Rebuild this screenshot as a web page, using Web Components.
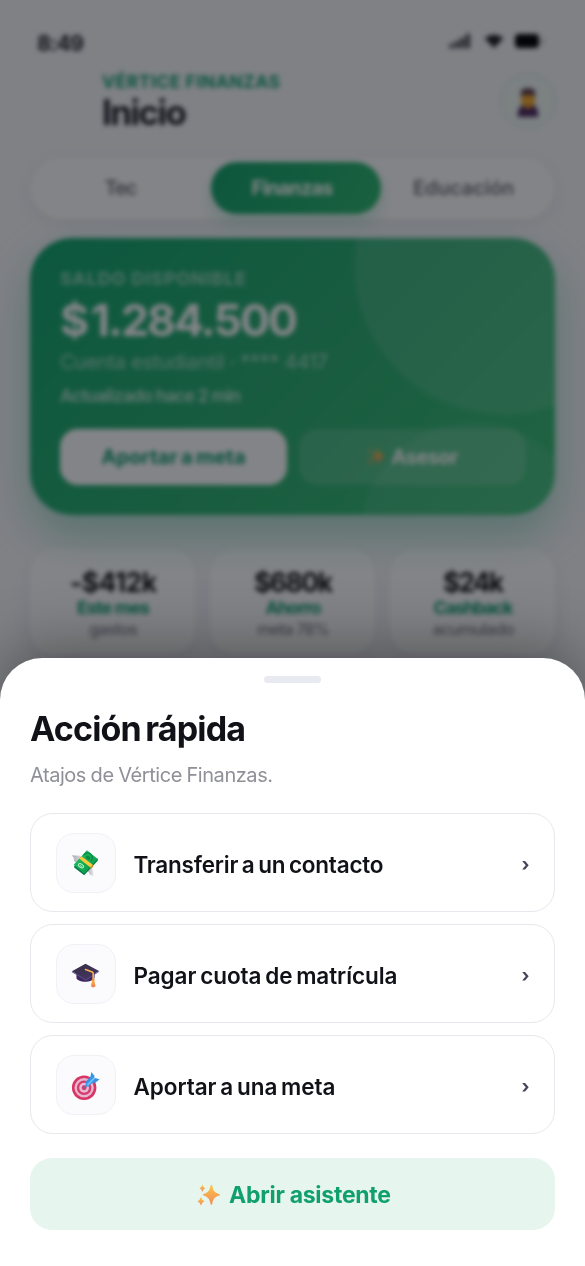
<!DOCTYPE html>
<html lang="es">
<head>
<meta charset="utf-8">
<meta name="viewport" content="width=device-width, initial-scale=1">
<title>Vértice Finanzas</title>
<style>
html,body{margin:0;height:100%;overflow:hidden;background:#f7f8fb}
body{font-family:Inter,"Plus Jakarta Sans","Liberation Sans",sans-serif;color:#111217}
</style>
</head>
<body>
<vf-screen></vf-screen>
<script>
const define = (name, html, setup) => {
  const tpl = document.createElement('template');
  tpl.innerHTML = html;
  customElements.define(name, class extends HTMLElement {
    connectedCallback() {
      if (this.shadowRoot) return;
      this.attachShadow({mode: 'open'}).append(tpl.content.cloneNode(true));
      if (setup) setup(this, this.shadowRoot);
    }
  });
};

/* One line of text tracked to a given measure: w = width, s = size, b = weight, l = line height, g = word gap */
const pen = document.createElement('canvas').getContext('2d');
define('vf-text', `<style>:host{display:block;white-space:nowrap;flex:none}</style><slot></slot>`, el => {
  const a = n => el.getAttribute(n);
  const text = el.textContent;
  const gap = +(a('g') || 0);
  const spaces = text.split(' ').length - 1;
  pen.font = `${a('b')} ${a('s')}px Inter`;
  const track = (a('w') - pen.measureText(text).width - gap * spaces) / (text.length - 1);
  el.style.cssText = `font-size:${a('s')}px;font-weight:${a('b')};line-height:${a('l')}px;width:${a('w')}px;word-spacing:${gap}px;letter-spacing:${track.toFixed(3)}px`;
});

const icons = {
  money: `<defs><linearGradient id="g" x2="1" y2="1"><stop stop-color="#24c969"/><stop offset="1" stop-color="#079044"/></linearGradient><linearGradient id="w" x2="1"><stop stop-color="#aaa8b0"/><stop offset="1" stop-color="#e7e5ea"/></linearGradient></defs>
   <path d="M1 7l9 .5 4 6-8 4.500-.5-3.500-2.500-1.500.5-2.500z" fill="url(#w)"/><path d="M17 24l6-6 2 12-4-1.500-1.500-3z" fill="url(#w)"/>
   <path d="M3.500 18.500v2l11 8.500 15-16v-2.500z" fill="#087b43"/><path d="M17.500 1.500 29.500 11 14.500 27 3 17.500z" fill="url(#g)"/>
   <path d="M14 7c2-3 5-3.500 7.500-1.500s2.500 5 .5 8" fill="none" stroke="#0b8b44" stroke-width="1.500"/><ellipse cx="18.700" cy="9.500" rx="2.600" ry="2" transform="rotate(35 18.700 9.500)" fill="#0b8c43"/>
   <ellipse cx="11" cy="18.500" rx="3.200" ry="1.900" transform="rotate(32 11 18.500)" fill="none" stroke="#b8f2c9" stroke-width="1"/><path d="M9.500 18l3 1.500" stroke="#b8f2c9"/>
   <path d="m11.500 8 12.500 9.500-2.500 2.800-12.500-9.800z" fill="#fac83c"/><path d="m24 17.500 .5 2-2.500 2.700-.5-1.900z" fill="#d99124"/>`,
  cap: `<defs><linearGradient id="c" x2="1" y2="1"><stop stop-color="#352d40"/><stop offset="1" stop-color="#46366b"/></linearGradient><linearGradient id="t" x2="0" y2="1"><stop stop-color="#f7c352"/><stop offset="1" stop-color="#f07947"/></linearGradient></defs>
   <path d="M6 13v7c2 5 17 5.500 20-.5v-7z" fill="#3d2762"/><path d="M1 12.500 16 4l15 8-14.500 9.500z" fill="url(#c)"/><path d="M1 12.500v1l15.500 9L31 13v-1l-14.500 9.500z" fill="#60528a"/>
   <path d="M16 10.500l7.500 2.800q1 .5 1 2v6" fill="none" stroke="#f5b14d" stroke-width="1.800" stroke-linecap="round"/><path d="M23.500 21h2l1.500 8q-2.500 2.500-5 0z" fill="url(#t)"/><circle cx="24.500" cy="21.500" r="1.400" fill="#ee8b45"/>`,
  target: `<circle cx="14.500" cy="18.500" r="13.500" fill="#d73564"/><circle cx="14.500" cy="18.500" r="10.700" fill="#e7b5d0"/><circle cx="14.500" cy="18.500" r="8" fill="#d63b6b"/><circle cx="14.500" cy="18.500" r="5.400" fill="#e8b9d3"/><circle cx="14.500" cy="18.500" r="2.700" fill="#cf3d6c"/>
   <path d="M14.500 18.500 24 9" stroke="#5977a8" stroke-width="1.300"/><path d="M16 17l.5-5.500 5-5.500 1-5 3.500 4.500-.5 2 6 1.500-4.500 4-4 .5-3.500 3.500z" fill="#3794e5"/><path d="M18 15.500l8-8" stroke="#72bdf5" stroke-width="2"/>`,
  sparkles: `<defs><linearGradient id="s" x2="0" y2="1"><stop stop-color="#fbc63e"/><stop offset="1" stop-color="#f28b61"/></linearGradient></defs><g fill="url(#s)"><path d="M20 1c.8 0 1 1 1.300 2 1.300 6 3 8.500 8.700 10.500 2.700 1 2.700 2 0 3-5.700 2-7.400 4.500-8.700 10.500-.5 2.500-2.100 2.500-2.600 0-1.300-6-3-8.500-8.700-10.500-2.700-1-2.700-2 0-3 5.700-2 7.400-4.500 8.700-10.500.3-1 .5-2 1.300-2z"/><path d="M7.500 1q1.200 4.300 4 5-2.800.9-4 5-1.200-4.100-4-5 2.800-.7 4-5z"/><path d="M5.500 18q1.400 5 5 6-3.600 1-5 6-1.400-5-5-6 3.600-1 5-6z"/></g>`,
  student: `<path d="M1 31c0-8 3-12 8-13h14c5 1 8 5 8 13z" fill="#4c2860"/><path d="M10 17h12v3l-6 3-6-3z" fill="#d98b21"/><rect x="6" y="5" width="20" height="14" rx="5" fill="#f2a72a"/><path d="M6 9V2l10-2 10 2v7q-10-4-20 0z" fill="#4f3044"/>`,
  signal: `<g fill="#1a1b22"><rect x="1" y="21" width="5" height="8" rx="1"/><rect x="9" y="16" width="5" height="13" rx="1"/><rect x="17" y="10" width="5" height="19" rx="1"/><rect x="25" y="3" width="5" height="26" rx="1"/></g>`,
  wifi: `<path d="M1 10Q16-3 31 10L16 28z" fill="#1a1b22"/>`
};
define('vf-icon', `<style>:host{display:block;flex:none}svg{display:block;width:100%;height:100%}</style><svg viewBox="0 0 32 32" preserveAspectRatio="none" aria-hidden="true"></svg>`, (el, root) => {
  root.querySelector('svg').innerHTML = icons[el.getAttribute('name')];
});

define('vf-status', `<style>
:host{display:flex;justify-content:space-between;align-items:center;height:28px;padding:29px 41px 1px 37px}
div{display:flex;align-items:center;padding-bottom:4px}
vf-text{color:#22232a}
.s{width:22px;height:18px}.w{width:20px;height:17px;margin-left:13px}
.b{width:24px;height:14px;border-radius:4px;background:#000;margin-left:11px}.t{width:2px;height:5px;background:#aaa;margin-left:3px}
</style><vf-text w="47" s="21.500" b="700" l="28">8:49</vf-text>
<div><vf-icon class="s" name="signal"></vf-icon><vf-icon class="w" name="wifi"></vf-icon><span class="b"></span><span class="t"></span></div>`);

define('vf-header', `<style>
:host{display:flex;justify-content:space-between;align-items:flex-start;padding:12px 29px 0 102px;height:86px;box-sizing:border-box}
.k{color:#0e9f6e}.n{color:#1b1c24}.a{width:54px;height:54px;border:1.500px solid #cbe6d9;border-radius:50%;display:grid;place-items:center;background:#f0f8f5;margin-top:3px}
vf-icon{width:22px;height:30px;margin:4px 1px 0 0}
</style><div><vf-text class="k" w="178" s="17.500" b="700" l="24">VÉRTICE FINANZAS</vf-text>
<vf-text class="n" w="85" s="35" b="700" l="36">Inicio</vf-text></div><div class="a"><vf-icon name="student"></vf-icon></div>`);

define('vf-tabs', `<style>
:host{display:grid;grid-template-columns:175px 170px 1fr;margin:14px 31px 0;height:61px;box-sizing:border-box;padding:4px 5px 5px;border-radius:31px;background:#fff;box-shadow:0 5px 18px #28305012;color:#70727f}
div{display:grid;place-items:center;border-radius:26px}
.f{padding-right:5px}.l{padding-right:3px}.on vf-text{margin-right:7px}
.on{background:linear-gradient(120deg,#12a26b,#2cb86f);color:#fff;box-shadow:0 8px 18px #0e9f6e38}
</style><div class="f"><vf-text w="33" s="20" b="600" l="28">Tec</vf-text></div><div class="on"><vf-text w="82" s="20" b="700" l="28">Finanzas</vf-text></div><div class="l"><vf-text w="101" s="20" b="600" l="28">Educación</vf-text></div>`);

define('vf-balance', `<style>
:host{display:block;position:relative;overflow:hidden;margin:0 30px;height:277px;box-sizing:border-box;padding:28px 30px 0;border-radius:42px;background:linear-gradient(135deg,#0fa56d,#29ae70 50%,#38be76);color:#fff}
.c{position:absolute;border-radius:50%;background:#ffffff1c}.c1{width:300px;height:300px;right:-99px;top:-123px}.c2{width:224px;height:224px;right:-30px;top:184px;background:#ffffff14}
.in{position:relative}
.k{opacity:.55}.m{opacity:.6;margin-top:2px}.u{opacity:.7;margin-top:8px}
.row{display:grid;grid-template-columns:227px 227px;gap:12px;margin-top:19px}
.row div{height:56px;border-radius:18px;display:flex;align-items:center;justify-content:center;gap:7px;background:#ffffff26}
.row .p{background:#fff;color:#0b9c69}
vf-icon{width:18px;height:18px}
</style><span class="c c1"></span><span class="c c2"></span><div class="in">
<vf-text class="k" w="186" s="18" b="700" l="26">SALDO DISPONIBLE</vf-text>
<vf-text w="238" s="44.500" b="700" l="56" g="-5">$ 1.284.500</vf-text>
<vf-text class="m" w="268" s="20" b="400" l="24">Cuenta estudiantil · **** 4417</vf-text>
<vf-text class="u" w="181" s="17.500" b="600" l="28">Actualizado hace 2 min</vf-text>
<div class="row"><div class="p"><vf-text w="144" s="20" b="700" l="28" g="-1.500">Aportar a meta</vf-text></div><div><vf-icon name="sparkles"></vf-icon><vf-text w="67" s="20" b="700" l="28">Asesor</vf-text></div></div></div>`);

define('vf-stats', `<style>
:host{display:grid;grid-template-columns:repeat(3,1fr);gap:15px;margin:33px 30px 0}
div{height:107px;box-sizing:border-box;padding:20px 0 0 2px;border-radius:26px;background:#fff;box-shadow:0 5px 18px #28305012;display:flex;flex-direction:column;align-items:center}
.g{color:#0e9f6e}.s{color:#858792;margin-top:-1px}
</style>
<div><vf-text w="87" s="26.500" b="700" l="28">-$412k</vf-text><vf-text class="g" w="73" s="18" b="700" l="24">Este mes</vf-text><vf-text class="s" w="49" s="16.500" b="500" l="20">gastos</vf-text></div>
<div><vf-text w="79" s="26.500" b="700" l="28">$680k</vf-text><vf-text class="g" w="56" s="18" b="700" l="24">Ahorro</vf-text><vf-text class="s" w="73" s="16.500" b="500" l="20">meta 78%</vf-text></div>
<div><vf-text w="61" s="26.500" b="700" l="28">$24k</vf-text><vf-text class="g" w="80" s="18" b="700" l="24">Cashback</vf-text><vf-text class="s" w="82" s="16.500" b="500" l="20">acumulado</vf-text></div>`);

define('vf-action', `<style>
:host{display:flex;align-items:center;height:98.500px;box-sizing:border-box;border:1.500px solid #e7e8ed;border-radius:23px;padding:0 24.500px;color:#111217}
.t{width:60px;height:60px;box-sizing:border-box;border:1.500px solid #f0f1f5;border-radius:18px;background:#fbfbfe;display:grid;place-items:center;margin:1px 18px 0 0}
::slotted(vf-icon){width:29px;height:29px;margin:2px 1px 0 0}
.l{padding-top:5px}
.a{margin-left:auto;font-size:18.500px;font-weight:700;line-height:28px;color:#45465a;padding-top:3px}
</style><div class="t"><slot name="icon"></slot></div><div class="l"><slot></slot></div><span class="a">›</span>`);

define('vf-assist', `<style>
:host{display:flex;align-items:center;justify-content:center;gap:9px;height:72px;margin-top:24px;border-radius:22px;background:#e6f5ed;color:#10a06c;box-sizing:border-box;padding:3px 0 0 3px}
vf-icon{width:23px;height:23px}
</style><vf-icon name="sparkles"></vf-icon><vf-text w="162" s="23" b="700" l="30">Abrir asistente</vf-text>`);

define('vf-sheet', `<style>
:host{display:block;box-sizing:border-box;background:#fff;border-radius:42px 42px 0 0;padding:18px 30px 0;box-shadow:0 -12px 60px #00000059}
.h{width:57px;height:6.500px;border-radius:4px;background:#e8e9f1;margin:0 auto 25px}
.sub{color:#8f9098;margin-top:11px}
.list{display:grid;gap:12.500px;margin-top:24.500px}
</style><div class="h"></div>
<vf-text w="216" s="34" b="700" l="42" g="-3">Acción rápida</vf-text>
<vf-text class="sub" w="243" s="20" b="400" l="28" g="-0.500">Atajos de Vértice Finanzas.</vf-text>
<div class="list">
<vf-action><vf-icon slot="icon" name="money"></vf-icon><vf-text w="250" s="22.500" b="600" l="30" g="-1.800">Transferir a un contacto</vf-text></vf-action>
<vf-action><vf-icon slot="icon" name="cap"></vf-icon><vf-text w="264" s="22.500" b="600" l="30" g="-1.800">Pagar cuota de matrícula</vf-text></vf-action>
<vf-action><vf-icon slot="icon" name="target"></vf-icon><vf-text w="202" s="22.500" b="600" l="30" g="-1.800">Aportar a una meta</vf-text></vf-action>
</div><vf-assist></vf-assist>`);

define('vf-screen', `<style>
:host{display:block;position:relative;width:585px;height:1266px;overflow:hidden;background:#f7f8fb}
.app{filter:blur(2.400px);height:700px}
.card{margin-top:19px;filter:drop-shadow(0 20px 22px #0e9f6e55)}
.dim{position:absolute;inset:0;background:#080a1080}
vf-sheet{position:absolute;left:0;right:0;top:658px;bottom:0}
</style><div class="app"><vf-status></vf-status><vf-header></vf-header><vf-tabs></vf-tabs><div class="card"><vf-balance></vf-balance></div><vf-stats></vf-stats></div>
<div class="dim"></div><vf-sheet></vf-sheet>`);
</script>
</body>
</html>
